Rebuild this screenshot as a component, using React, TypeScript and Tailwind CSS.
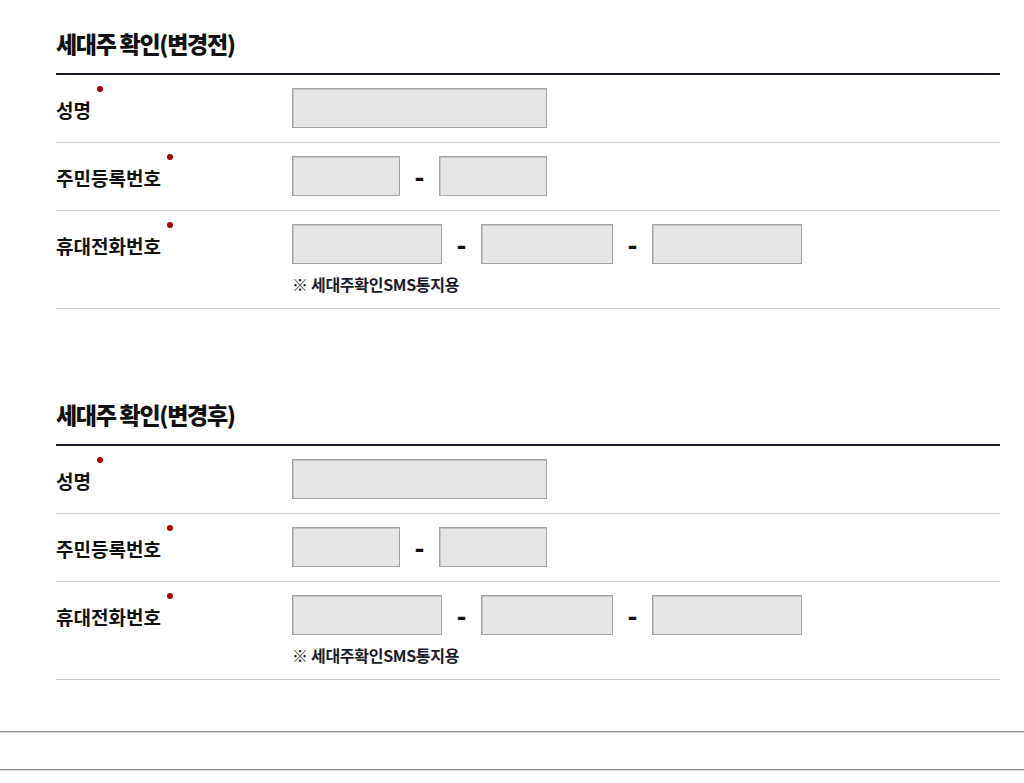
const font = { fontFamily: '"Noto Sans CJK KR", "Noto Sans", sans-serif' };

const Required = ({ children }: { children: string }) => (
  <div className="w-[236px] shrink-0 pt-[11px]">
    <span className="relative text-[19px] font-bold leading-[22px] text-[#111]">
      {children}
      <span className="absolute -right-[12px] -top-[10px] h-[6px] w-[6px] rounded-full bg-[#a60000]" />
    </span>
  </div>
);

const Field = ({ w }: { w: string }) => (
  <div className={`${w} h-[40px] border border-[#a3a3a3] bg-[#e6e6e6] shadow-[inset_1px_1px_0_#c4c4c4]`} />
);

const Dash = () => (
  <span className="flex w-[39px] items-center justify-center text-[26px] font-black leading-none text-[#111]">-</span>
);

const Section = ({ title }: { title: string }) => (
  <section>
    <h2 className="text-[23px] font-extrabold leading-[26px] tracking-[-1.3px] text-[#111]">{title}</h2>
    <div className="mt-[17px] h-[2px] bg-[#1b1f2b]" />

    <div className="flex border-b border-[#cfcfcf] pt-[13px] pb-[14px]">
      <Required>성명</Required>
      <Field w="w-[255px]" />
    </div>

    <div className="flex border-b border-[#cfcfcf] pt-[13px] pb-[14px]">
      <Required>주민등록번호</Required>
      <div className="flex">
        <Field w="w-[108px]" />
        <Dash />
        <Field w="w-[108px]" />
      </div>
    </div>

    <div className="flex border-b border-[#cfcfcf] pt-[13px] pb-[14px]">
      <Required>휴대전화번호</Required>
      <div>
        <div className="flex">
          <Field w="w-[150px]" />
          <Dash />
          <Field w="w-[132px]" />
          <Dash />
          <Field w="w-[150px]" />
        </div>
        <p className="mt-[10px] text-[16px] font-bold leading-[20px] tracking-[-0.3px] text-[#1a1a2a]">
          ※ 세대주확인SMS통지용
        </p>
      </div>
    </div>
  </section>
);

export default function App() {
  return (
    <div className="h-[783px] w-full overflow-hidden bg-white" style={font}>
      <div className="ml-[56px] w-[944px] pt-[30px]">
        <Section title="세대주 확인(변경전)" />
        <div className="h-[92px]" />
        <Section title="세대주 확인(변경후)" />
      </div>
      <div className="mt-[51px] h-[2px] border-t border-[#8f8f8f] bg-[#d6d6d6]" />
      <div className="mt-[36px] h-[2px] border-t border-[#8f8f8f] bg-[#d6d6d6]" />
    </div>
  );
}
